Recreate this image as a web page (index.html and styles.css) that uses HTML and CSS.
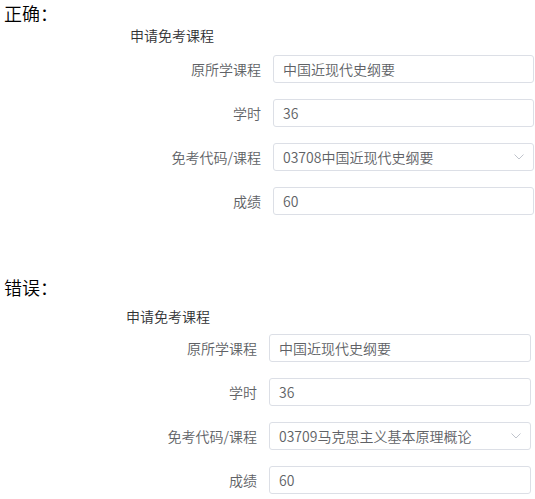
FILE: index.html
```html
<!DOCTYPE html>
<html lang="zh-CN">
<head>
<meta charset="utf-8">
<title>免考课程</title>
<link rel="stylesheet" href="styles.css">
</head>
<body>
<section class="block">
  <h2 class="title">正确：</h2>
  <div class="subtitle">申请免考课程</div>
  <div class="form">
    <div class="row"><div class="label">原所学课程</div><div class="input">中国近现代史纲要</div></div>
    <div class="row"><div class="label">学时</div><div class="input">36</div></div>
    <div class="row"><div class="label">免考代码/课程</div><div class="input select"><span>03708中国近现代史纲要</span><svg class="arrow" width="10" height="6" viewBox="0 0 10 6"><path d="M0.5 0.5 L5 5 L9.5 0.5" fill="none" stroke="#c0c4cc" stroke-width="1"/></svg></div></div>
    <div class="row"><div class="label">成绩</div><div class="input">60</div></div>
  </div>
</section>
<section class="block block-wrong">
  <h2 class="title">错误：</h2>
  <div class="subtitle">申请免考课程</div>
  <div class="form">
    <div class="row"><div class="label">原所学课程</div><div class="input">中国近现代史纲要</div></div>
    <div class="row"><div class="label">学时</div><div class="input">36</div></div>
    <div class="row"><div class="label">免考代码/课程</div><div class="input select"><span>03709马克思主义基本原理概论</span><svg class="arrow" width="10" height="6" viewBox="0 0 10 6"><path d="M0.5 0.5 L5 5 L9.5 0.5" fill="none" stroke="#c0c4cc" stroke-width="1"/></svg></div></div>
    <div class="row"><div class="label">成绩</div><div class="input">60</div></div>
  </div>
</section>
</body>
</html>
```

FILE: styles.css
```css
* { box-sizing: border-box; }
html, body { margin: 0; padding: 0; background: #fff; }
body {
  padding-left: 4px;
  font-family: "Noto Sans CJK SC", "Noto Sans", sans-serif;
  font-size: 14px;
  font-weight: 350;
  color: #606266;
}
.block { display: flex; flex-direction: column; }
.block-wrong { margin-top: 59px; }
.title {
  margin: 0 0 -1px 0;
  font-size: 18px;
  line-height: 26px;
  font-weight: 350;
  color: #000;
}
.block-wrong .title { margin-bottom: 6px; }
.subtitle {
  padding-left: 126px;
  line-height: 20px;
  color: #303133;
}
.block-wrong .subtitle { padding-left: 122px; }
.form {
  margin-top: 10px;
  display: flex;
  flex-direction: column;
  gap: 16px;
}
.block-wrong .form { margin-top: 8px; }
.row {
  display: flex;
  align-items: center;
  height: 28px;
}
.label {
  width: 269px;
  padding-right: 12px;
  text-align: right;
  color: #606266;
}
.block-wrong .label { width: 265px; }
.input {
  width: 261px;
  height: 28px;
  border: 1px solid #dcdfe6;
  border-radius: 3px;
  padding: 0 9px 0 9px;
  line-height: 26px;
  color: #606266;
  display: flex;
  align-items: center;
}
.block-wrong .input { width: 262px; }
.select { justify-content: space-between; }
.arrow { display: block; }
```
